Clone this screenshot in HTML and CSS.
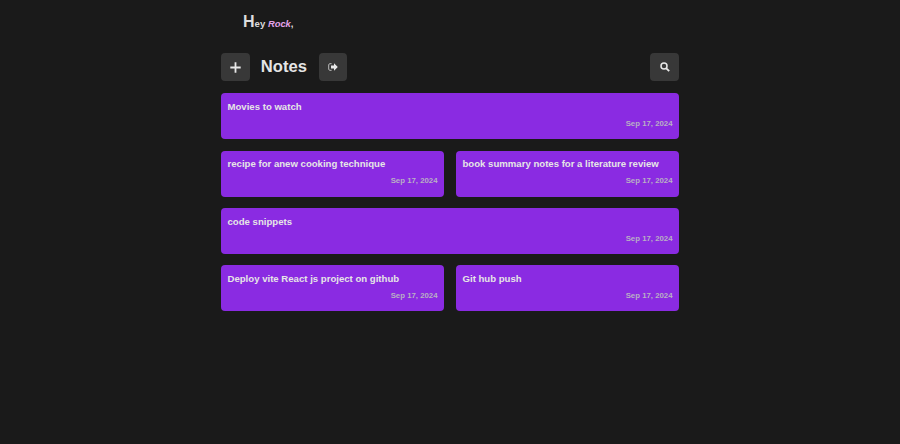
FILE: index.html
```html
<!DOCTYPE html>
<html lang="en">
<head>
  <meta charset="UTF-8" />
  <meta name="viewport" content="width=device-width, initial-scale=1.0"/>
  <title>Notes</title>
  <link rel="stylesheet" href="styles.css">
</head>
<body>
  <div class="container">
    <div class="greeting"><span class="big">H</span>ey <em>Rock</em>,</div>

    <div class="toolbar">
      <button class="icon-btn plus" aria-label="Add note">
        <svg width="11" height="11" viewBox="0 0 11 11"><path d="M5.5 .3v10.4M.3 5.5h10.4" stroke="#e8e8e8" stroke-width="1.8" fill="none"/></svg>
      </button>
      <h1>Notes</h1>
      <button class="icon-btn" aria-label="Log out">
        <svg width="10" height="8" viewBox="0 0 10 8"><path d="M3.6 .7H1.9C1.2 .7 .7 1.2 .7 1.9v4.2c0 .7 .5 1.2 1.2 1.2h1.7" stroke="#bbb" stroke-width="1" fill="none"/><path d="M6 .3 9.8 4 6 7.7V5.6H3V2.4h3z" fill="#e8e8e8"/></svg>
      </button>
      <button class="icon-btn search" aria-label="Search">
        <svg width="10" height="10" viewBox="0 0 10 10"><circle cx="4" cy="4" r="3" stroke="#e8e8e8" stroke-width="1.5" fill="none"/><path d="M6.3 6.3 9.2 9.2" stroke="#e8e8e8" stroke-width="1.8"/></svg>
      </button>
    </div>

    <div class="notes">
      <div class="note wide">
        <h3>Movies to watch</h3>
        <small>Sep 17, 2024</small>
      </div>
      <div class="note">
        <h3>recipe for anew cooking technique</h3>
        <small>Sep 17, 2024</small>
      </div>
      <div class="note">
        <h3>book summary notes for a literature review</h3>
        <small>Sep 17, 2024</small>
      </div>
      <div class="note wide">
        <h3>code snippets</h3>
        <small>Sep 17, 2024</small>
      </div>
      <div class="note">
        <h3>Deploy vite React js project on github</h3>
        <small>Sep 17, 2024</small>
      </div>
      <div class="note">
        <h3>Git hub push</h3>
        <small>Sep 17, 2024</small>
      </div>
    </div>
  </div>
</body>
</html>
```

FILE: styles.css
```css
* { box-sizing: border-box; }
body {
  margin: 0;
  height: 444px;
  overflow: hidden;
  font-family: 'Liberation Sans', Arial, sans-serif;
  background: #1a1a1a;
  color: #e5e5e5;
}

.container {
  width: 458px;
  margin: 0 auto;
}

.greeting {
  height: 53px;
  padding: 14px 0 0 22px;
  font-size: 9.6px;
  font-weight: bold;
  line-height: 16px;
  color: #ddd;
}

.greeting .big {
  font-size: 16px;
}

.greeting em {
  font-size: 9.4px;
  color: #e3a3ea;
}

.toolbar {
  display: flex;
  align-items: center;
  height: 28px;
  margin-bottom: 12.2px;
}

.toolbar h1 {
  margin: 0 12px 0 10.8px;
  font-size: 16.6px;
  line-height: 28px;
  font-weight: bold;
  color: #e5e5e5;
}

.icon-btn {
  display: flex;
  justify-content: center;
  align-items: center;
  width: 28px;
  height: 28px;
  padding: 0;
  border: none;
  border-radius: 4px;
  background: #383838;
}

.plus {
  width: 29px;
}

.search {
  margin-left: auto;
  width: 29px;
}

.notes {
  display: grid;
  grid-template-columns: 1fr 1fr;
  gap: 11.4px 12px;
}

.note {
  height: 46px;
  padding: 6.9px 6.5px 0;
  border-radius: 4px;
  background: #8a2be2;
}

.note.wide {
  grid-column: span 2;
}

.note h3 {
  margin: 0;
  font-size: 9.6px;
  line-height: 13px;
  font-weight: bold;
  color: #e6e6e6;
}

.note small {
  display: block;
  margin-top: 6px;
  font-size: 7.8px;
  line-height: 10px;
  font-weight: bold;
  text-align: right;
  color: #b9b0c4;
}
```
